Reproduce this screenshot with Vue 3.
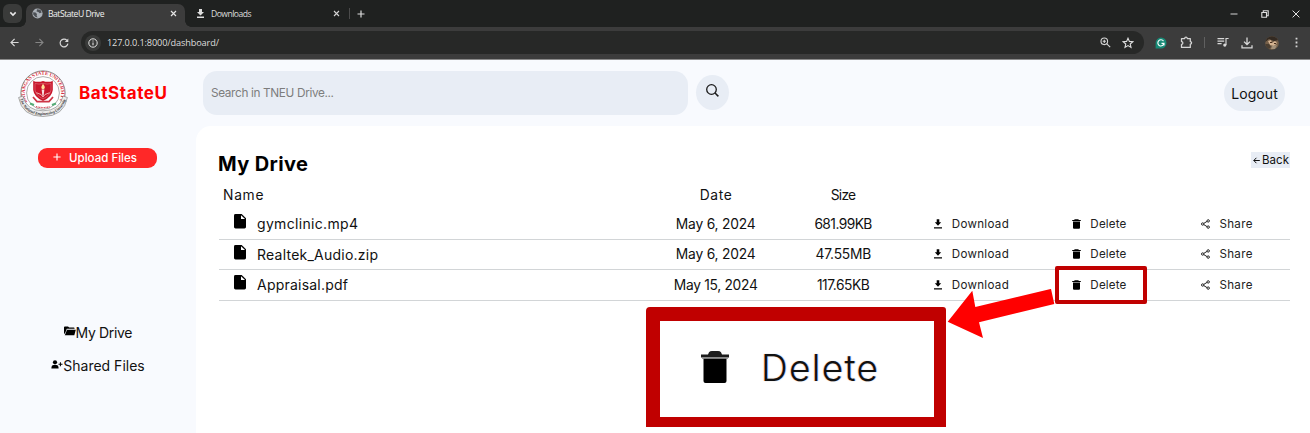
<script setup>
const files = [
  { name: 'gymclinic.mp4', nameW: 101, date: 'May 6, 2024', dateW: 80, size: '681.99KB', sizeW: 58 },
  { name: 'Realtek_Audio.zip', nameW: 121, date: 'May 6, 2024', dateW: 80, size: '47.55MB', sizeW: 56 },
  { name: 'Appraisal.pdf', nameW: 91, date: 'May 15, 2024', dateW: 84, size: '117.65KB', sizeW: 53 },
]

// Tracks a label out or in so that it occupies the given width.
const vFit = {
  mounted(el, { value }) {
    const natural = el.getBoundingClientRect().width
    const gap = (value - natural) / (el.textContent.length - 1)
    el.style.letterSpacing = gap + 'px'
    el.style.marginRight = -gap + 'px'
  },
}
</script>

<template>
  <div class="window">
    <div class="tabs">
      <span class="tab-menu"><svg width="8" height="6" viewBox="0 0 8 6"><path d="M1.3 1.4 4 4.1 6.7 1.4" fill="none" stroke="#e8e8e8" stroke-width="1.5" /></svg></span>
      <div class="tab active">
        <svg class="fav" width="11" height="11" viewBox="0 0 11 11"><circle cx="5.5" cy="5.5" r="5.1" fill="#a9afb6" /><path d="M1.2 4.2 3.6 4.6 5 6 4.6 7.4 5.6 9.6 3.2 8.8 1.2 6.5ZM5 1.2 8.4 1.8 9.7 4.4 7.6 5.2 6.4 4 4.6 3.4Z" fill="#4b4f54" /></svg>
        <span class="tab-title" v-fit="56.5">BatStateU Drive</span>
        <svg class="close" width="7" height="7" viewBox="0 0 7 7"><path d="M1 1 6 6M6 1 1 6" stroke="#e4e4e4" stroke-width="1.2" /></svg>
      </div>
      <div class="tab second">
        <svg class="fav" width="9" height="9" viewBox="0 0 9 9"><path d="M3 0H6V3H8L4.5 6.5 1 3H3ZM1 7.6H8V8.9H1Z" fill="#dedede" /></svg>
        <span class="tab-title" v-fit="40.5">Downloads</span>
        <svg class="close" width="7" height="7" viewBox="0 0 7 7"><path d="M1 1 6 6M6 1 1 6" stroke="#d4d4d4" stroke-width="1.1" /></svg>
      </div>
      <i class="tab-sep"></i>
      <svg class="new-tab" width="8" height="8" viewBox="0 0 8 8"><path d="M4 .5V7.5M.5 4H7.5" stroke="#dcdcdc" stroke-width="1.2" /></svg>
      <div class="controls">
        <svg width="8" height="10" viewBox="0 0 8 10"><path d="M.5 5H7.5" stroke="#d5d5d5" stroke-width="1" /></svg>
        <svg width="8" height="8" viewBox="0 0 8 8"><path d="M.8 2.5H5.5V7.2H.8ZM2.3 2.3V.8H7.2V5.7H5.7" fill="none" stroke="#dedede" stroke-width="1.1" /></svg>
        <svg width="8" height="8" viewBox="0 0 8 8"><path d="M.6 .6 7.4 7.4M7.4 .6 .6 7.4" stroke="#e4e4e4" stroke-width="1" /></svg>
      </div>
    </div>

    <div class="toolbar">
      <svg class="nav-back" width="9" height="9" viewBox="0 0 9 9"><path d="M8.6 4.5H1M4.6 .8 1 4.5 4.6 8.2" fill="none" stroke="#d8d8d8" stroke-width="1.2" /></svg>
      <svg class="nav-fwd" width="9" height="9" viewBox="0 0 9 9"><path d="M.4 4.5H8M4.4 .8 8 4.5 4.4 8.2" fill="none" stroke="#858585" stroke-width="1.1" /></svg>
      <svg class="nav-reload" width="10" height="10" viewBox="0 0 10 10"><path d="M8.9 5.6A3.9 3.9 0 1 1 7.9 2.3L8.7 3.1" fill="none" stroke="#d8d8d8" stroke-width="1.2" /><path d="M9.3 .5V4H5.8Z" fill="#d8d8d8" /></svg>
      <div class="address">
        <span class="info"><svg width="10" height="10" viewBox="0 0 10 10"><circle cx="5" cy="5" r="4.2" fill="none" stroke="#e2e2e2" stroke-width="1" /><path d="M5 4.4V7.3M5 2.5V3.6" stroke="#e2e2e2" stroke-width="1.1" /></svg></span>
        <span class="url" v-fit="112">127.0.0.1:8000/dashboard/</span>
        <svg class="magnify" width="11" height="11" viewBox="0 0 11 11"><circle cx="4.3" cy="4.3" r="3.3" fill="none" stroke="#d5d5d5" stroke-width="1.1" /><path d="M6.8 6.8 10.2 10.2M2.7 4.3H5.9M4.3 2.7V5.9" stroke="#d5d5d5" stroke-width="1.1" /></svg>
        <svg class="star" width="12" height="12" viewBox="0 0 12 12"><path d="M6 1.2 7.4 4.4 10.9 4.7 8.2 7 9 10.4 6 8.6 3 10.4 3.8 7 1.1 4.7 4.6 4.4Z" fill="none" stroke="#dedede" stroke-width="1.1" /></svg>
      </div>
      <svg class="grammar" width="12" height="12" viewBox="0 0 12 12"><path d="M6 .5A5.5 5.5 0 1 1 6 11.5H.6V6A5.5 5.5 0 0 1 6 .5Z" fill="#168a76" /><path d="M8.5 4.1A3.1 3.1 0 1 0 9 6.4H6.5M9 6.3V8.4" fill="none" stroke="#fff" stroke-width="1.1" /></svg>
      <svg class="puzzle" width="13" height="13" viewBox="0 0 13 13"><path d="M1.5 2.5H4.7A1.3 1.3 0 0 1 7.3 2.5H10.3V5.5A1.3 1.3 0 0 1 10.3 8.1V11.4H1.5V8.3A1.4 1.4 0 0 0 1.5 5.5Z" fill="none" stroke="#d5d5d5" stroke-width="1.25" stroke-linejoin="round" /></svg>
      <i class="bar-sep"></i>
      <svg class="queue" width="12" height="11" viewBox="0 0 12 11"><path d="M.5 1.6H7.2M.5 4.1H7.2M.5 6.6H4.6M9 8V1.5H11.6" fill="none" stroke="#d8d8d8" stroke-width="1.15" /><circle cx="7.8" cy="8.1" r="1.6" fill="#d8d8d8" /></svg>
      <svg class="dl" width="12" height="12" viewBox="0 0 12 12"><path d="M6 .6V7.4M3 4.6 6 7.5 9 4.6M1 8.3V10.8H11V8.3" fill="none" stroke="#d8d8d8" stroke-width="1.3" /></svg>
      <svg class="avatar" width="14" height="14" viewBox="0 0 14 14"><clipPath id="face"><circle cx="7" cy="7" r="6.8" /></clipPath><g clip-path="url(#face)"><path d="M0 0H14V14H0Z" fill="#76604a" /><path d="M0 0H14V4L9 5 4 3 0 6Z" fill="#332a22" /><path d="M3 5 6 4 7 7 10 5 12 7 9 10 5 9Z" fill="#d5b391" /><path d="M0 8 4 8 6 11 3 14H0Z" fill="#4a3e31" /><path d="M7 10 12 9 10 13 6 13Z" fill="#a29079" /><path d="M5 6H7V7H5ZM9 7H11V8H9Z" fill="#49301f" /></g></svg>
      <svg class="dots" width="3" height="11" viewBox="0 0 3 11"><path d="M.6 .8H2.4V2.6H.6ZM.6 4.6H2.4V6.4H.6ZM.6 8.4H2.4V10.2H.6Z" fill="#d5d5d5" /></svg>
    </div>

    <header class="top">
      <div class="brand">
        <svg class="seal" width="50" height="48" viewBox="0 0 50 48">
          <defs>
            <path id="ring" d="M11.1 34.7A18.2 18.2 0 1 1 38.9 34.7" />
            <path id="band" d="M2 29Q7 45 25 45.1Q43 45 48 29" />
          </defs>
          <circle cx="25" cy="23" r="22.1" fill="#fff" stroke="#777" stroke-width=".9" />
          <circle cx="25" cy="23" r="16.4" fill="#fff" stroke="#8d8d8d" stroke-width=".7" />
          <text class="ring-text"><textPath href="#ring" startOffset="3" textLength="75">BATANGAS STATE UNIVERSITY</textPath></text>
          <path d="M15.2 11Q20 12.7 25 11Q30 12.7 34.8 11V20Q34 27 25 31Q16 27 15.2 20Z" fill="#c9172b" />
          <path d="M17 13.5Q21 14.7 25 13.4Q29 14.7 33 13.5V20Q32 25.6 25 28.8Q18 25.6 17 20Z" fill="none" stroke="#df7582" stroke-width=".6" />
          <path d="M25 13.8C27.7 17 27 19.1 25 19.3C23 19.1 22.7 17 25 13.8Z" fill="#ffe29a" />
          <path d="M23.6 19.5H26.4L25.6 25.8H24.4Z" fill="#f7dfdf" />
          <path d="M18.3 22.7 23 24.5 25 27.1 27 24.5 31.7 22.7" fill="none" stroke="#f4bcbc" stroke-width=".9" />
          <path d="M15 27 19 31.6H31L35 27" fill="none" stroke="#cd3748" stroke-width="1.7" />
          <path d="M12 33.5 16 35M38 33.5 34 35" stroke="#55ad77" stroke-width="2" />
          <path d="M18 36.7Q25 38.5 32 36.7" fill="none" stroke="#d34c5b" stroke-width="1.3" stroke-dasharray="1 .6" />
          <path d="M.6 27.5Q4 46.5 25 46.5Q46 46.5 49.4 27.5L45.1 26Q41.5 40.8 25 40.8Q8.5 40.8 4.9 26Z" fill="#ececec" stroke="#777" stroke-width=".6" />
          <text class="band-text"><textPath href="#band" textLength="60">The National Engineering University</textPath></text>
        </svg>
        <span class="brand-name" v-fit="88">BatStateU</span>
      </div>
      <div class="search"><span v-fit="123">Search in TNEU Drive...</span></div>
      <button class="find"><svg width="13" height="13" viewBox="0 0 13 13"><circle cx="5.5" cy="5.5" r="4.8" fill="none" stroke="#1b1b1b" stroke-width="1.3" /><path d="M9 9 12.4 12.4" stroke="#1b1b1b" stroke-width="1.5" /></svg></button>
      <button class="logout"><span v-fit="46.5">Logout</span></button>
    </header>

    <div class="body">
      <aside>
        <button class="upload"><svg width="8" height="8" viewBox="0 0 8 8"><path d="M4 .4V7.6M.4 4H7.6" stroke="#fff" stroke-width="1.1" /></svg><span v-fit="68">Upload Files</span></button>
        <nav>
          <a><svg width="12" height="10" viewBox="0 0 12 10"><path d="M0 1.2Q0 .4 .9 .4H4L5.2 1.6H9.7Q10.6 1.6 10.6 2.7H2.8L1.4 6.6Q.9 7.3 0 8.2Z" /><path d="M3 3.7H11.8L10.3 9.2H.8Z" /></svg><span v-fit="57">My Drive</span></a>
          <a><svg width="12" height="9" viewBox="0 0 12 9"><circle cx="4" cy="2.3" r="2.1" /><path d="M.4 8.4Q.4 5 2.7 5H5.3Q7.6 5 7.6 8.4ZM8.9 2.3H9.9V3.7H11.5V4.7H9.9V6.2H8.9V4.7H7.5V3.7H8.9Z" /></svg><span v-fit="81.5">Shared Files</span></a>
        </nav>
      </aside>

      <main>
        <div class="heading">
          <h1 v-fit="90">My Drive</h1>
          <button class="back"><svg width="7" height="7" viewBox="0 0 7 7"><path d="M6.8 3.5H.8M3.4 .8 .8 3.5 3.4 6.2" fill="none" stroke="#111" stroke-width="1" /></svg><span v-fit="27">Back</span></button>
        </div>
        <div class="row head">
          <span class="cell label-name"><span v-fit="40.5">Name</span></span>
          <span class="cell"><span v-fit="32">Date</span></span>
          <span class="cell"><span v-fit="25.5">Size</span></span>
        </div>
        <div v-for="f in files" :key="f.name" class="row file">
          <span class="name"><svg width="12" height="15" viewBox="0 0 12 15"><path d="M1.5 0H7.7L12 4.2V13Q12 14.4 10.5 14.4H1.5Q0 14.4 0 13V1.4Q0 0 1.5 0Z" /><path d="M7 1.2V5H11Z" fill="#fff" /></svg><span v-fit="f.nameW">{{ f.name }}</span></span>
          <span class="cell"><span v-fit="f.dateW">{{ f.date }}</span></span>
          <span class="cell"><span v-fit="f.sizeW">{{ f.size }}</span></span>
          <span class="cell act"><svg width="8" height="10" viewBox="0 0 8 10"><path d="M2.7 .3H5.3V3.3H7.2L4 6.7 .8 3.3H2.7ZM0 8.3H8V9.4H0Z" /></svg><span v-fit="57">Download</span></span>
          <span class="cell act"><svg width="9" height="10" viewBox="0 0 9 10"><path d="M2.6 .2H6.4L6.8 1H8.8V2H.2V1H2.2ZM1 2.5H8V8.8Q8 9.8 7 9.8H2Q1 9.8 1 8.8Z" /></svg><span v-fit="36">Delete</span></span>
          <span class="cell act"><svg width="9" height="10" viewBox="0 0 9 10"><g fill="none" stroke="#222" stroke-width="1"><path d="M2.8 4.4 6 2.4M2.8 5.6 6 7.6" /><circle cx="1.7" cy="5" r="1.2" /><circle cx="7.2" cy="1.9" r="1.2" /><circle cx="7.2" cy="8.1" r="1.2" /></g></svg><span v-fit="33">Share</span></span>
        </div>
      </main>
    </div>

    <div class="highlight"></div>
    <div class="callout">
      <svg width="30" height="33" viewBox="0 0 30 33"><path d="M9 1.2Q10 0 12 0H18Q20 0 21 1.2L22 3.4H29V6.4H1V3.4H8Z" fill="#1c1c1c" /><path d="M2 6.4H28V7.8H2Z" fill="#8c8c8c" /><path d="M3.5 7.8H26.5V30Q26.5 32 24.5 32H5.5Q3.5 32 3.5 30Z" fill="#000" /></svg>
      <span v-fit="117">Delete</span>
    </div>
    <svg class="arrow" width="108" height="50" viewBox="947 289 108 50"><path d="M947.7 321.7 972.3 290.7 975.3 307 1051 288.9 1054.3 304 979 322.3 983 338Z" fill="#f00" /></svg>
  </div>
</template>

<style>
body { margin: 0; background: #f8fafd; overflow: hidden; }
</style>

<style scoped>
.window { position: relative; width: 1310px; height: 433px; overflow: hidden; background: #f8fafe; color: #111; font-family: Inter, "Open Sans", sans-serif; font-size: 14px; }
.window * { box-sizing: border-box; }
svg { display: block; flex: none; }
span { white-space: nowrap; }
button { border: 0; padding: 0; margin: 0; font: inherit; color: inherit; display: flex; align-items: center; }

.tabs { display: flex; height: 27px; background: #1f2120; font-family: "Open Sans", sans-serif; font-size: 8.6px; color: #dcdcdc; }
.tab-menu { display: flex; align-items: center; justify-content: center; width: 19px; height: 19px; margin: 4px 4px 0 3px; border-radius: 6px; background: #3a3b3a; }
.tab { display: flex; align-items: center; height: 23px; margin-top: 4px; line-height: 12px; }
.tab.active { position: relative; width: 159px; padding: 0 8px 4px 6px; background: #3c3c3c; border-radius: 7px 7px 0 0; color: #f0f0f0; }
.tab.active::before, .tab.active::after { content: ""; position: absolute; bottom: 0; width: 6px; height: 6px; }
.tab.active::before { left: -6px; background: radial-gradient(circle at 0 0, transparent 5.5px, #3c3c3c 6px); }
.tab.active::after { right: -6px; background: radial-gradient(circle at 100% 0, transparent 5.5px, #3c3c3c 6px); }
.tab.second { width: 155px; padding: 0 0 4px 11px; }
.tab .fav { margin-right: 5px; }
.second .fav { margin-right: 6px; }
.close { margin-left: auto; }
.tab-sep { width: 1px; height: 11px; margin: 8px 7px 0 9px; background: #4b4b4b; }
.new-tab { margin-top: 10px; }
.controls { display: flex; align-items: center; gap: 23px; height: 27px; margin-left: auto; padding-right: 10px; }

.toolbar { display: flex; align-items: center; height: 33px; padding: 0 0 1px 10px; background: #3c3c3c; border-bottom: 1px solid #8b8b8b; }
.nav-fwd { margin-left: 16px; }
.nav-reload { margin-left: 15px; }
.address { display: flex; align-items: center; width: 1063px; height: 23px; margin-left: 12px; padding: 0 10px 0 4px; border-radius: 12px; background: #272827; color: #dedede; font-family: "Open Sans", sans-serif; font-size: 9.2px; }
.info { display: flex; align-items: center; justify-content: center; width: 16px; height: 16px; margin-right: 6px; border-radius: 50%; background: #3a3b3a; }
.magnify { margin-left: auto; }
.star { margin-left: 11px; }
.grammar { margin-left: 11px; }
.puzzle { margin-left: 13px; }
.bar-sep { width: 1px; height: 11px; margin-left: 11px; background: #606060; }
.queue { margin-left: 12px; }
.dl { margin-left: 12px; }
.avatar { margin-left: 12px; }
.dots { margin-left: 16px; }

.top { display: flex; height: 66px; padding-left: 18px; }
.brand { display: flex; width: 185px; padding-top: 10px; }
.ring-text { font-family: "Liberation Serif", serif; font-weight: 700; font-size: 5.2px; fill: #d62d40; }
.band-text { font-family: "Liberation Serif", serif; font-weight: 700; font-style: italic; font-size: 4.1px; fill: #333; }
.brand-name { margin-left: 11px; height: 46px; line-height: 46px; color: #f00; font-size: 17px; font-weight: 700; }
.search { display: flex; align-items: center; width: 485px; height: 44px; margin-top: 11px; padding-left: 8px; border-radius: 14px; background: #e8edf5; color: #7d7d7d; font-size: 11.8px; }
.find { justify-content: center; width: 33px; height: 35px; margin: 15px 0 0 8px; padding-bottom: 4px; border-radius: 50%; background: #e8edf5; }
.logout { justify-content: center; width: 61px; height: 35px; margin: 16px 25px 0 auto; border-radius: 18px; background: #e8edf5; }

.body { display: flex; height: 307px; }
aside { width: 196px; padding-top: 22px; }
.upload { width: 119px; height: 20px; margin-left: 38px; padding: 0 0 0 15px; border-radius: 9px; background: #ff2828; color: #fff; font-size: 11.5px; font-weight: 500; }
.upload svg { margin: 0 8px 2px 0; }
nav { display: flex; flex-direction: column; gap: 13px; padding-top: 154px; }
nav a { display: flex; justify-content: center; align-items: center; height: 20px; }
nav svg { margin-bottom: 2px; }

main { flex: 1; padding: 22px 20px 0 23px; background: #fff; border-top-left-radius: 15px; }
.heading { display: flex; justify-content: space-between; height: 33px; }
h1 { height: 33px; margin: 0 0 0 -1px; line-height: 33px; font-size: 20px; font-weight: 700; color: #000; white-space: nowrap; align-self: flex-start; }
.back { width: 39px; height: 16px; margin-top: 4px; padding-left: 2px; gap: 2px; background: #e8edf5; font-size: 11.5px; }
.row { display: grid; grid-template-columns: 433px repeat(5, 1fr); align-items: center; height: 30.5px; }
.head { height: 28px; }
.name { display: flex; align-items: center; padding-left: 15px; gap: 11px; }
.file { border-bottom: 1px solid #d2d5d7; }
.name svg { margin-bottom: 4px; }
.cell { display: flex; justify-content: center; align-items: center; font-size: 13.8px; }
.label-name { justify-content: flex-start; padding-left: 4px; }
.act { gap: 9.5px; font-size: 11.6px; color: #222; padding-left: 1px; }

.highlight { position: absolute; left: 1055px; top: 266px; width: 92px; height: 38px; border: 4px solid #c00000; border-radius: 2px; }
.callout { position: absolute; left: 646px; top: 307px; width: 300px; height: 120px; display: flex; align-items: center; padding: 0 0 4px 40px; gap: 31px; border: solid #c00000; border-width: 14px 12px 10px 14px; border-radius: 4px 3px 0 0; background: #fff; font-size: 37px; font-weight: 300; text-shadow: -.8px 0 .8px rgba(255, 160, 60, .6), .8px 0 .8px rgba(50, 140, 255, .6); }
.arrow { position: absolute; left: 947px; top: 289px; }
</style>
